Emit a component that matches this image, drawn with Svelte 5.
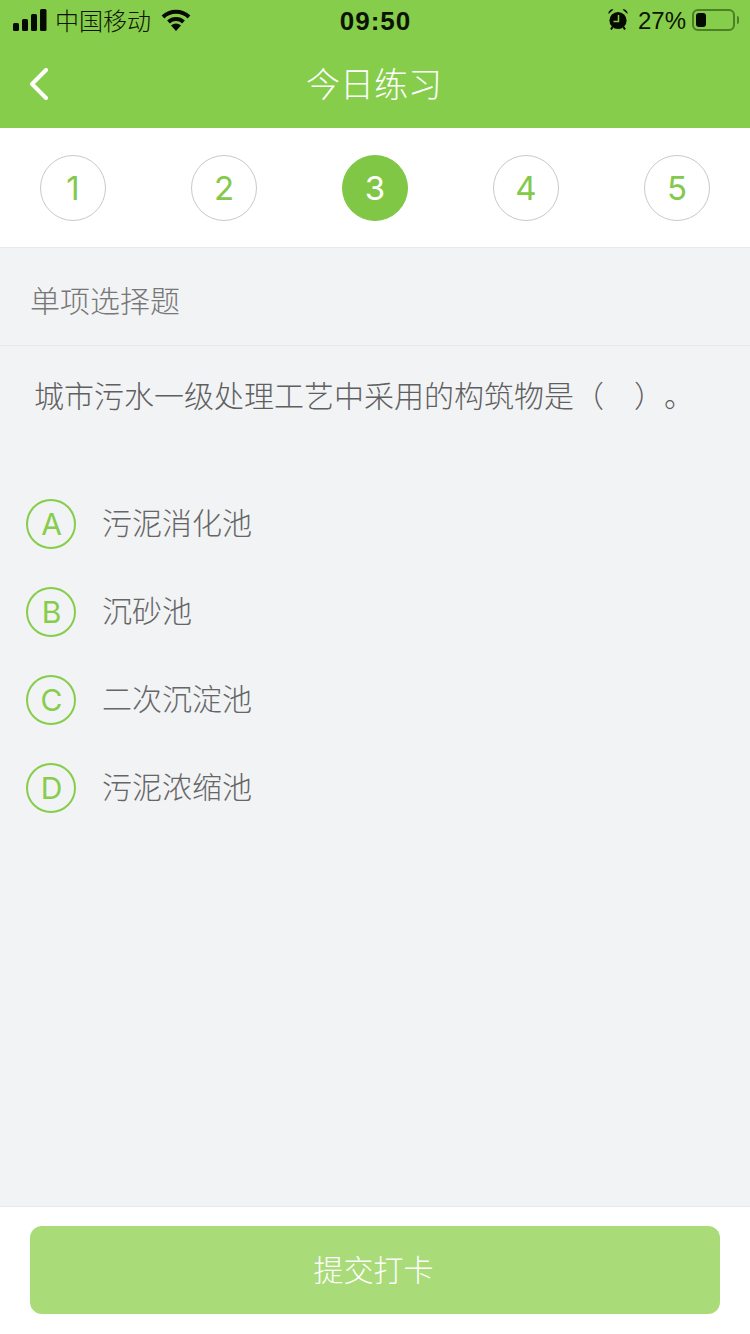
<script>
  const steps = [1, 2, 3, 4, 5];
  const current = 3;
  const options = [
    { key: 'A', text: '污泥消化池' },
    { key: 'B', text: '沉砂池' },
    { key: 'C', text: '二次沉淀池' },
    { key: 'D', text: '污泥浓缩池' }
  ];
</script>

<div class="page">
  <header class="header">
    <div class="status">
      <div class="status-left">
        <svg class="signal" width="34" height="22" viewBox="0 0 34 22" aria-hidden="true">
          <rect x="0" y="14" width="6" height="8" rx="1.500" />
          <rect x="9" y="10" width="6" height="12" rx="1.500" />
          <rect x="18" y="5" width="6" height="17" rx="1.500" />
          <rect x="27" y="0" width="6.500" height="22" rx="1.500" />
        </svg>
        <span class="carrier">中国移动</span>
        <svg class="wifi" width="30" height="22" viewBox="0 0 30 22" aria-hidden="true">
          <path d="M2 8 A19 19 0 0 1 28 8" />
          <path d="M7.500 13 A11 11 0 0 1 22.500 13" />
          <path class="wedge" d="M15 22 L10 16.500 A7.500 7.500 0 0 1 20 16.500 Z" />
        </svg>
      </div>
      <div class="time">09:50</div>
      <div class="status-right">
        <svg class="alarm" width="20" height="21" viewBox="0 0 20 21" aria-hidden="true">
          <circle cx="10" cy="11.500" r="8.600" />
          <path class="hands" d="M10.500 6 V12.500 H5.500" />
          <path d="M0.500 5 A4 4 0 0 1 5.500 0.500 Z M19.500 5 A4 4 0 0 0 14.500 0.500 Z" />
          <path class="feet" d="M4.500 18 L3 20.500 M15.500 18 L17 20.500" />
        </svg>
        <span class="pct">27%</span>
        <div class="battery"><div class="level"></div></div>
        <div class="nub"></div>
      </div>
    </div>
    <div class="nav">
      <svg class="back" width="20" height="32" viewBox="0 0 20 32" aria-hidden="true">
        <path d="M17 2 L3 16 L17 30" />
      </svg>
      <h1 class="title">今日练习</h1>
    </div>
  </header>

  <div class="steps">
    {#each steps as n}
      <div class="step" class:active={n === current}>{n}</div>
    {/each}
  </div>

  <main class="content">
    <div class="type">单项选择题</div>
    <p class="question">城市污水一级处理工艺中采用的构筑物是（　）。</p>
    <ul class="options">
      {#each options as o}
        <li class="option">
          <span class="badge">{o.key}</span>
          <span class="label">{o.text}</span>
        </li>
      {/each}
    </ul>
  </main>

  <footer class="footer">
    <button class="submit" type="button">提交打卡</button>
  </footer>
</div>

<style>
  :global(body) {
    margin: 0;
  }
  .page {
    width: 750px;
    height: 1334px;
    display: flex;
    flex-direction: column;
    background: #f2f3f5;
    font-family: "Noto Sans CJK SC", "Liberation Sans", sans-serif;
    text-spacing-trim: space-all;
    overflow: hidden;
  }
  .header {
    height: 128px;
    flex: none;
    background: #86cd4b;
    display: flex;
    flex-direction: column;
  }
  .status {
    height: 40px;
    display: grid;
    grid-template-columns: 1fr auto 1fr;
    align-items: center;
    padding: 0 11px 0 13px;
    color: #0b1403;
  }
  .status-left {
    display: flex;
    align-items: center;
  }
  .signal {
    fill: #050a02;
    margin-right: 8px;
    margin-top: -1px;
  }
  .carrier {
    font-size: 24px;
    line-height: 40px;
    font-weight: 300;
    margin-top: -2px;
  }
  .wifi {
    margin-left: 10px;
    margin-top: -1px;
    fill: none;
    stroke: #050a02;
    stroke-width: 4;
  }
  .wedge {
    fill: #050a02;
    stroke: none;
  }
  .time {
    font-family: "Liberation Sans", sans-serif;
    font-size: 26px;
    font-weight: 700;
    letter-spacing: 1px;
    line-height: 40px;
    margin: 1px 1px 0 0;
  }
  .status-right {
    display: flex;
    align-items: center;
    justify-content: flex-end;
  }
  .alarm {
    fill: #050a02;
    margin: -2px 10px 0 0;
  }
  .hands {
    fill: none;
    stroke: #86cd4b;
    stroke-width: 1.500;
  }
  .feet {
    fill: none;
    stroke: #050a02;
    stroke-width: 2;
  }
  .pct {
    font-family: "Liberation Sans", sans-serif;
    font-size: 24px;
    line-height: 40px;
    margin-right: 6px;
  }
  .battery {
    box-sizing: border-box;
    width: 43px;
    height: 22px;
    margin-top: -2px;
    border: 2px solid #4c7f26;
    border-radius: 6px;
    padding: 2px;
  }
  .level {
    width: 10px;
    height: 100%;
    background: #050a02;
    border-radius: 3px;
  }
  .nub {
    width: 2px;
    height: 8px;
    margin: -2px 0 0 2px;
    background: #4c7f26;
    border-radius: 0 2px 2px 0;
  }
  .nav {
    position: relative;
    height: 88px;
    display: flex;
    align-items: center;
    justify-content: center;
  }
  .back {
    position: absolute;
    left: 29px;
    top: 28px;
    fill: none;
    stroke: #fff;
    stroke-width: 4;
    stroke-linecap: round;
    stroke-linejoin: round;
  }
  .title {
    margin: -2px 0 0 -2px;
    font-size: 34px;
    font-weight: 300;
    color: #fff;
    line-height: 88px;
  }
  .steps {
    height: 120px;
    flex: none;
    box-sizing: border-box;
    background: #fff;
    border-bottom: 1px solid #e8e9eb;
    display: flex;
    justify-content: space-between;
    align-items: center;
    padding: 0 40px;
  }
  .step {
    width: 66px;
    height: 66px;
    box-sizing: border-box;
    border: 1px solid #c9c9c9;
    border-radius: 50%;
    display: flex;
    align-items: center;
    justify-content: center;
    font-family: "Inter", sans-serif;
    font-weight: 400;
    font-size: 33px;
    color: #84c84c;
  }
  .step.active {
    background: #7fc745;
    border-color: #7fc745;
    color: #fff;
  }
  .content {
    flex: 1;
    min-height: 0;
  }
  .type {
    height: 98px;
    box-sizing: border-box;
    border-bottom: 1px solid #e9eaec;
    padding: 4px 0 0 30px;
    display: flex;
    align-items: center;
    font-size: 30px;
    font-weight: 300;
    color: #777;
  }
  .question {
    margin: 0;
    padding: 27px 30px 0 34px;
    font-size: 30px;
    line-height: 42px;
    font-weight: 300;
    color: #5f5f5f;
    white-space: nowrap;
  }
  .options {
    list-style: none;
    margin: 0;
    padding: 84px 0 0 26px;
    display: flex;
    flex-direction: column;
    gap: 38px;
  }
  .option {
    display: flex;
    align-items: center;
    height: 50px;
  }
  .badge {
    width: 50px;
    height: 50px;
    box-sizing: border-box;
    border: 2px solid #86cd4b;
    border-radius: 50%;
    display: flex;
    align-items: center;
    justify-content: center;
    padding-left: 1px;
    font-family: "Inter", sans-serif;
    font-weight: 400;
    font-size: 30px;
    color: #86cd4b;
  }
  .label {
    margin-left: 26px;
    padding-bottom: 6px;
    font-size: 30px;
    font-weight: 300;
    color: #666;
  }
  .footer {
    height: 128px;
    flex: none;
    box-sizing: border-box;
    background: #fff;
    border-top: 1px solid #e8e9eb;
    padding: 19px 30px 0;
  }
  .submit {
    display: block;
    width: 100%;
    height: 88px;
    border: none;
    border-radius: 12px;
    background: #a9db78;
    color: #fff;
    font-family: "Noto Sans CJK SC", sans-serif;
    font-size: 30px;
    font-weight: 300;
    padding: 0 3px 4px 0;
  }
</style>
